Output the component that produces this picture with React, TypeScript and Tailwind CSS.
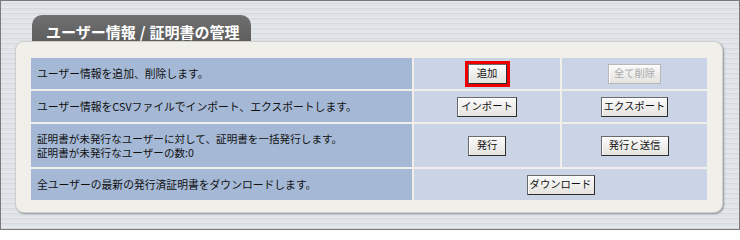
const jp = { fontFamily: '"Noto Sans CJK JP", "Noto Sans", sans-serif' };

function Btn({ label, w, disabled = false }: { label: string; w: string; disabled?: boolean }) {
  const base =
    "h-[20px] flex items-center justify-center whitespace-nowrap text-[10.3px] leading-none bg-[linear-gradient(to_bottom,#fbfbfb,#e4e3df)] shadow-[inset_1px_1px_0_#ffffff]";
  return (
    <button
      className={
        disabled
          ? `${base} ${w} border border-[#b8b8b8] text-[#a9a9a9]`
          : `${base} ${w} border border-[#6a6a6a] border-r-[#2e2e2e] border-b-[#2e2e2e] text-[#111]`
      }
      style={jp}
    >
      {label}
    </button>
  );
}

export default function App() {
  return (
    <div
      className="w-[740px] h-[230px] border border-[#7a7a7a] pt-[14px] bg-[repeating-linear-gradient(to_bottom,#e3e6eb_0px,#e3e6eb_2px,#d6d9df_2px,#d6d9df_3px,#dfe2e7_3px,#dfe2e7_5px)]"
      style={jp}
    >
      <div className="ml-[31px] w-[219px] h-[26px] rounded-t-[10px] bg-[linear-gradient(to_bottom,#707070,#5e5e5e)] pl-[14px] pt-[4px]">
        <span className="text-[15px] font-bold text-white leading-[18px] whitespace-nowrap">
          ユーザー情報<span className="mx-[4px]">/</span>証明書の管理
        </span>
      </div>
      <div className="ml-[14px] w-[708px] h-[172px] rounded-[9px] bg-[#f0efe9] border border-[#cfcfcb] shadow-[1px_1px_2px_rgba(0,0,0,0.35)] pl-[15px] pt-[16px]">
        <div className="grid grid-cols-[381px_146px_145px] grid-rows-[31px_31px_43px_31px] gap-[2px] text-[10.8px] text-[#111] leading-[13px]">
          <div className="bg-[#a5b9d6] flex items-center pl-[6px]">ユーザー情報を追加、削除します。</div>
          <div className="bg-[#cbd3e6] flex items-center justify-center">
            <div className="border-[3px] border-[#ee0000]">
              <Btn label="追加" w="w-[39px]" />
            </div>
          </div>
          <div className="bg-[#cbd3e6] flex items-center justify-center">
            <Btn label="全て削除" w="w-[53px]" disabled />
          </div>

          <div className="bg-[#a5b9d6] flex items-center pl-[6px]">ユーザー情報をCSVファイルでインポート、エクスポートします。</div>
          <div className="bg-[#cbd3e6] flex items-center justify-center">
            <Btn label="インポート" w="w-[60px]" />
          </div>
          <div className="bg-[#cbd3e6] flex items-center justify-center">
            <Btn label="エクスポート" w="w-[67px]" />
          </div>

          <div className="bg-[#a5b9d6] flex flex-col justify-center gap-[1px] pl-[6px] text-[10.6px]">
            <span>証明書が未発行なユーザーに対して、証明書を一括発行します。</span>
            <span>証明書が未発行なユーザーの数:0</span>
          </div>
          <div className="bg-[#cbd3e6] flex items-center justify-center">
            <Btn label="発行" w="w-[38px]" />
          </div>
          <div className="bg-[#cbd3e6] flex items-center justify-center">
            <Btn label="発行と送信" w="w-[68px]" />
          </div>

          <div className="bg-[#a5b9d6] flex items-center pl-[6px]">全ユーザーの最新の発行済証明書をダウンロードします。</div>
          <div className="col-span-2 bg-[#cbd3e6] flex items-center justify-center">
            <Btn label="ダウンロード" w="w-[68px]" />
          </div>
        </div>
      </div>
    </div>
  );
}
